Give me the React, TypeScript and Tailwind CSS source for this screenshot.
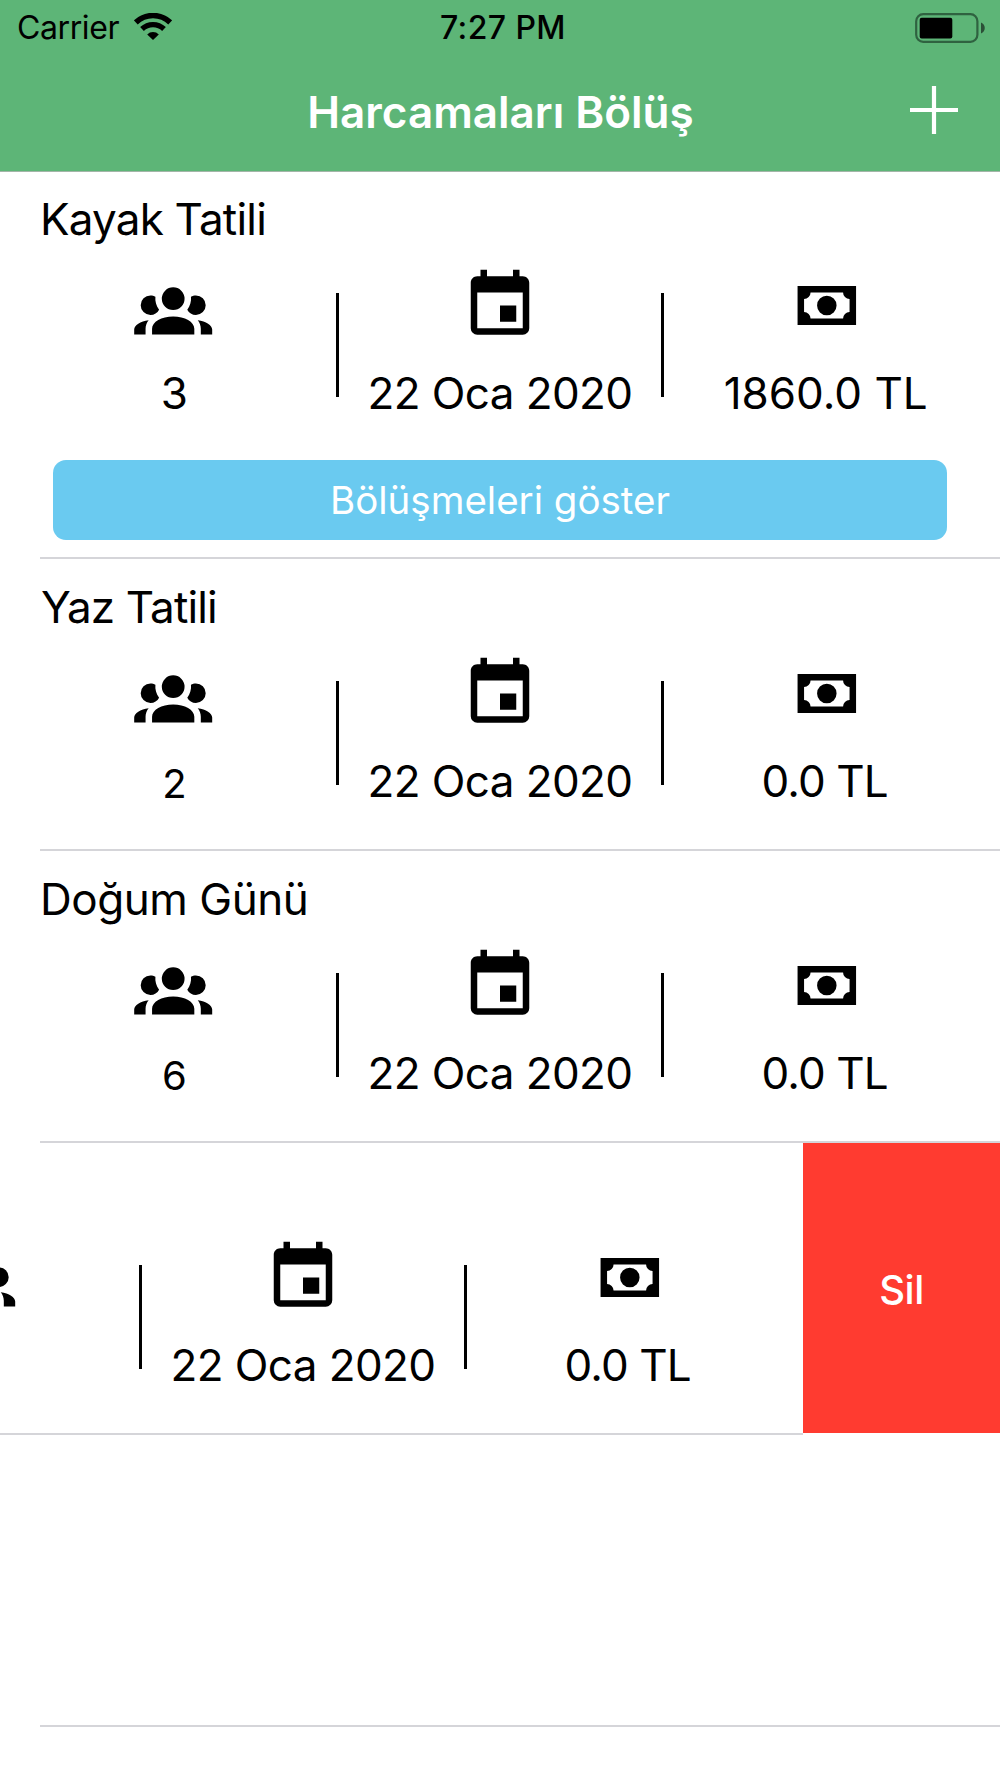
import type { ReactNode } from "react";

type Expense = {
  title: string;
  titleClass: string;
  people: string;
  peopleClass: string;
  date: string;
  amount: string;
  amountClass: string;
};

const expenses: Expense[] = [
  {
    title: "Kayak Tatili",
    titleClass: "tracking-[-0.8px]",
    people: "3",
    peopleClass: "text-[44px] leading-[60px]",
    date: "22 Oca 2020",
    amount: "1860.0 TL",
    amountClass: "text-[44px] leading-[60px]",
  },
  {
    title: "Yaz Tatili",
    titleClass: "pl-px tracking-[-0.85px]",
    people: "2",
    peopleClass: "text-[40px] leading-[65px]",
    date: "22 Oca 2020",
    amount: "0.0 TL",
    amountClass: "pr-0.5 text-[44px] leading-[60px] tracking-[-0.9px]",
  },
  {
    title: "Doğum Günü",
    titleClass: "tracking-[-0.45px]",
    people: "6",
    peopleClass: "text-[40px] leading-[65px]",
    date: "22 Oca 2020",
    amount: "0.0 TL",
    amountClass: "pr-0.5 text-[44px] leading-[60px] tracking-[-0.9px]",
  },
];

const swiped: Expense = { ...expenses[2], title: "", people: "" };

function GroupIcon() {
  return (
    <svg viewBox="0.25 -0.75 24 24" className="size-[78px] overflow-visible" fill="currentColor">
      <path d="M12,5.5A3.5,3.5 0 0,1 15.5,9A3.5,3.5 0 0,1 12,12.5A3.5,3.5 0 0,1 8.5,9A3.5,3.5 0 0,1 12,5.5M5,8C5.56,8 6.08,8.15 6.53,8.42C6.38,9.85 6.8,11.27 7.66,12.38C7.16,13.34 6.16,14 5,14A3,3 0 0,1 2,11A3,3 0 0,1 5,8M19,8A3,3 0 0,1 22,11A3,3 0 0,1 19,14C17.84,14 16.84,13.34 16.34,12.38C17.2,11.27 17.62,9.85 17.47,8.42C17.92,8.15 18.44,8 19,8M5.5,18.25C5.5,16.18 8.41,14.5 12,14.5C15.59,14.5 18.5,16.18 18.5,18.25V20H5.5V18.25M0,20V18.5C0,17.11 1.89,15.94 4.45,15.6C3.86,16.28 3.5,17.22 3.5,18.25V20H0M24,20H20.5V18.25C20.5,17.22 20.14,16.28 19.55,15.6C22.11,15.94 24,17.11 24,18.5V20Z" />
    </svg>
  );
}

function CalendarIcon() {
  return (
    <svg viewBox="0 0.15 24 24" className="size-[78px]" fill="currentColor">
      <path d="M19,19H5V8H19M16,1V3H8V1H6V3H5C3.89,3 3,3.89 3,5V19A2,2 0 0,0 5,21H19A2,2 0 0,0 21,19V5C21,3.89 20.1,3 19,3H18V1M17,12H12V17H17V12Z" />
    </svg>
  );
}

function CashIcon() {
  return (
    <svg viewBox="-0.25 0.15 24 24" className="size-[78px]" fill="currentColor">
      <path d="M3,6H21V18H3V6M12,9A3,3 0 0,1 15,12A3,3 0 0,1 12,15A3,3 0 0,1 9,12A3,3 0 0,1 12,9M7,8A2,2 0 0,1 5,10V14A2,2 0 0,1 7,16H17A2,2 0 0,1 19,14V10A2,2 0 0,1 17,8H7Z" />
    </svg>
  );
}

function WifiIcon() {
  return (
    <svg viewBox="0 0 38 27" className="-mt-[3px] ml-[15px] h-[27px] w-[38px]" fill="none" stroke="currentColor">
      <path d="M1.8 9.4A25 25 0 0 1 36.2 9.4" strokeWidth="5.6" />
      <path d="M8 16A16 16 0 0 1 30 16" strokeWidth="5.4" />
      <path d="M19 27L13.2 21.4A8.2 8.2 0 0 1 24.8 21.4Z" fill="currentColor" stroke="none" />
    </svg>
  );
}

function BatteryIcon() {
  return (
    <svg viewBox="0 0 72 30" className="-mt-[0.5px] h-[30px] w-[72px]">
      <rect x="1.2" y="1.2" width="61.2" height="27.6" rx="7" fill="none" stroke="#2f6240" strokeWidth="2.2" />
      <rect x="4.7" y="4.8" width="32.6" height="20.6" rx="2" fill="#000" />
      <path d="M66 9.5C71 11.5 71 18.5 66 20.5Z" fill="#2b4f37" />
    </svg>
  );
}

function StatusBar() {
  return (
    <div className="grid h-[53px] grid-cols-3 items-start pl-[17px] pr-[13px] pt-[13px] text-[32px] leading-[30px] text-black">
      <div className="flex items-center">
        <span className="tracking-[-0.4px]">Carrier</span>
        <WifiIcon />
      </div>
      <span className="pl-0.5 text-center font-medium tracking-[0.4px]">7:27 PM</span>
      <div className="flex justify-end">
        <BatteryIcon />
      </div>
    </div>
  );
}

function Column({ icon, text, textClass }: { icon: ReactNode; text: string; textClass: string }) {
  return (
    <div className="flex flex-1 flex-col items-center gap-[18px]">
      {icon}
      <span className={`h-[60px] whitespace-nowrap ${textClass}`}>{text}</span>
    </div>
  );
}

function Separator() {
  return <div className="mt-[26px] h-[104px] w-[3px] bg-black" />;
}

function Stats({ item }: { item: Expense }) {
  return (
    <div className="flex px-[13px] pt-[18px]">
      <Column icon={<GroupIcon />} text={item.people} textClass={item.peopleClass} />
      <Separator />
      <Column icon={<CalendarIcon />} text={item.date} textClass="text-[44px] leading-[60px] tracking-[-0.6px]" />
      <Separator />
      <Column icon={<CashIcon />} text={item.amount} textClass={item.amountClass} />
    </div>
  );
}

function Row({ item, children }: { item: Expense; children?: ReactNode }) {
  return (
    <li>
      <div className={children ? "h-[386px] pt-[18px]" : "h-[290px] pt-[18px]"}>
        <h2 className={`ml-10 h-[60px] text-[44px] leading-[60px] ${item.titleClass}`}>{item.title}</h2>
        <Stats item={item} />
        {children}
      </div>
      <div className="ml-10 h-0.5 bg-[#d5d5d9]" />
    </li>
  );
}

// Row dragged to the left, with its delete action revealed
function SwipedRow() {
  return (
    <li className="flex h-[292px] overflow-hidden">
      <div className="flex w-[803px] shrink-0 justify-end overflow-hidden border-b-2 border-[#d5d5d9]">
        <div className="w-[1000px] shrink-0 pt-[78px]">
          <Stats item={swiped} />
        </div>
      </div>
      <button className="h-[290px] flex-1 bg-[#ff3b30] pt-[3px] text-[40px] font-medium tracking-[-0.5px] text-white">
        Sil
      </button>
    </li>
  );
}

export default function App() {
  return (
    <div className="h-[1778px] w-[1000px] overflow-hidden bg-white font-['Inter',sans-serif] text-black">
      <header className="-mb-px h-[172px] border-b border-[#a3b5a8] bg-[#5db577]">
        <StatusBar />
        <div className="grid h-[114px] grid-cols-[1fr_auto_1fr] items-center">
          <h1 className="col-start-2 mt-1 pl-px text-[44px] font-semibold leading-[60px] text-white">
            Harcamaları Bölüş
          </h1>
          <button className="mr-[42px] justify-self-end text-white">
            <svg viewBox="0 0 48 48" className="block size-12" stroke="currentColor" strokeWidth="4.2">
              <path d="M24 0V48M0 24H48" />
            </svg>
          </button>
        </div>
      </header>

      <ul>
        <Row item={expenses[0]}>
          <button className="mx-[53px] mt-[37px] block h-20 w-[894px] rounded-[13px] bg-[#6acaf0] pt-0.5 text-[38.5px] text-white">
            Bölüşmeleri göster
          </button>
        </Row>
        <Row item={expenses[1]} />
        <Row item={expenses[2]} />
        <SwipedRow />
        <li className="pt-[290px]">
          <div className="ml-10 h-0.5 bg-[#d5d5d9]" />
        </li>
      </ul>
    </div>
  );
}
